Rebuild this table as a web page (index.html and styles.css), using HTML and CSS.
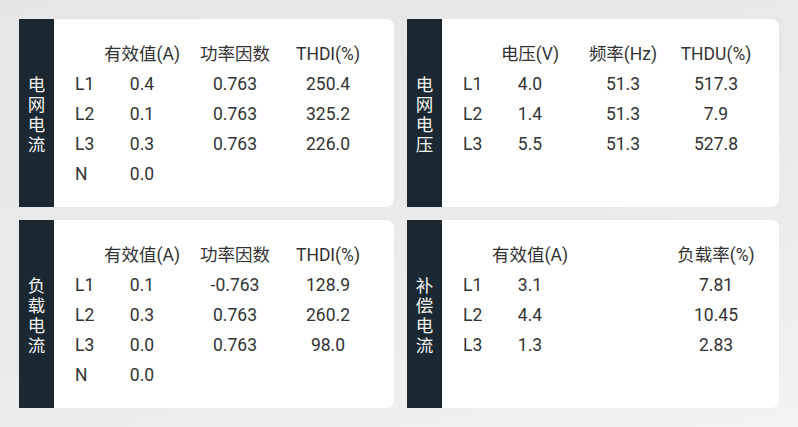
FILE: index.html
```html
<!DOCTYPE html>
<html lang="zh-CN">
<head>
<meta charset="utf-8">
<title>电能质量</title>
<link rel="stylesheet" href="styles.css">
</head>
<body>
<div class="board">
  <section class="card">
    <div class="side"><span class="side-text">电网电流</span></div>
    <div class="table">
      <div></div><div class="c">有效值(A)</div><div class="c">功率因数</div><div class="c">THDI(%)</div>
      <div>L1</div><div class="c">0.4</div><div class="c">0.763</div><div class="c">250.4</div>
      <div>L2</div><div class="c">0.1</div><div class="c">0.763</div><div class="c">325.2</div>
      <div>L3</div><div class="c">0.3</div><div class="c">0.763</div><div class="c">226.0</div>
      <div>N</div><div class="c">0.0</div><div></div><div></div>
    </div>
  </section>
  <section class="card">
    <div class="side"><span class="side-text">电网电压</span></div>
    <div class="table">
      <div></div><div class="c">电压(V)</div><div class="c">频率(Hz)</div><div class="c">THDU(%)</div>
      <div>L1</div><div class="c">4.0</div><div class="c">51.3</div><div class="c">517.3</div>
      <div>L2</div><div class="c">1.4</div><div class="c">51.3</div><div class="c">7.9</div>
      <div>L3</div><div class="c">5.5</div><div class="c">51.3</div><div class="c">527.8</div>
    </div>
  </section>
  <section class="card">
    <div class="side"><span class="side-text">负载电流</span></div>
    <div class="table">
      <div></div><div class="c">有效值(A)</div><div class="c">功率因数</div><div class="c">THDI(%)</div>
      <div>L1</div><div class="c">0.1</div><div class="c">-0.763</div><div class="c">128.9</div>
      <div>L2</div><div class="c">0.3</div><div class="c">0.763</div><div class="c">260.2</div>
      <div>L3</div><div class="c">0.0</div><div class="c">0.763</div><div class="c">98.0</div>
      <div>N</div><div class="c">0.0</div><div></div><div></div>
    </div>
  </section>
  <section class="card">
    <div class="side"><span class="side-text">补偿电流</span></div>
    <div class="table">
      <div></div><div class="c">有效值(A)</div><div></div><div class="c">负载率(%)</div>
      <div>L1</div><div class="c">3.1</div><div></div><div class="c">7.81</div>
      <div>L2</div><div class="c">4.4</div><div></div><div class="c">10.45</div>
      <div>L3</div><div class="c">1.3</div><div></div><div class="c">2.83</div>
    </div>
  </section>
</div>
</body>
</html>
```

FILE: styles.css
```css
* { box-sizing: border-box; }
html, body {
  margin: 0;
  padding: 0;
  width: 798px;
  height: 427px;
  overflow: hidden;
}
body {
  background: linear-gradient(165deg, #e6e6e6 0%, #eaeaea 55%, #f2f2f2 100%);
  font-family: Roboto, "Noto Sans CJK SC", sans-serif;
  color: #333;
}
.board {
  display: grid;
  grid-template-columns: 375px 372px;
  grid-template-rows: 188px 188px;
  column-gap: 13px;
  row-gap: 13px;
  padding: 19px;
}
.card {
  display: flex;
  background: #fff;
  border-radius: 0 8px 8px 0;
  overflow: hidden;
}
.side {
  width: 35px;
  flex: none;
  background: #1b2831;
  color: #f2f2f2;
  display: flex;
  align-items: center;
  justify-content: center;
}
.side-text {
  width: 18px;
  font-family: "Noto Sans CJK SC", sans-serif;
  font-size: 17.5px;
  line-height: 20px;
  word-break: break-all;
  text-align: center;
  padding-top: 1px;
}
.table {
  display: grid;
  grid-template-columns: 20.5px 93px 93px 93px;
  grid-auto-rows: 30px;
  padding: 20px 0 0 21px;
  font-size: 17.5px;
  line-height: 30px;
  white-space: nowrap;
}
.table > div { height: 30px; }
.c { text-align: center; }
```
